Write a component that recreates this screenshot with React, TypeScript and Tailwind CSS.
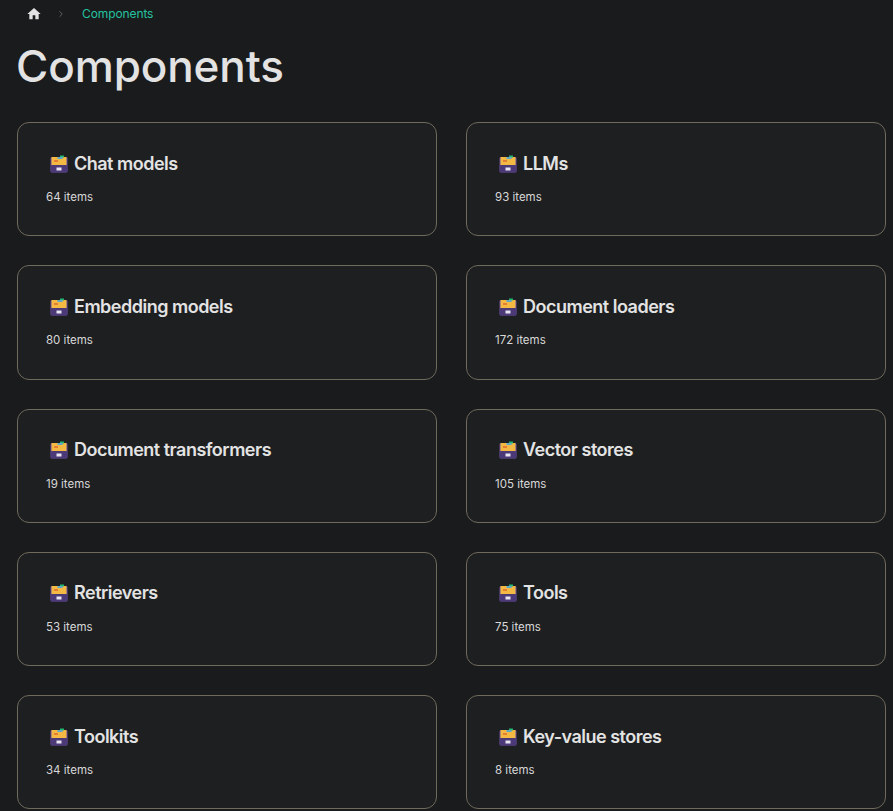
import { ChevronRight } from 'lucide-react';

const CARDS = [
  { title: 'Chat models', count: '64 items' },
  { title: 'LLMs', count: '93 items' },
  { title: 'Embedding models', count: '80 items' },
  { title: 'Document loaders', count: '172 items' },
  { title: 'Document transformers', count: '19 items' },
  { title: 'Vector stores', count: '105 items' },
  { title: 'Retrievers', count: '53 items' },
  { title: 'Tools', count: '75 items' },
  { title: 'Toolkits', count: '34 items' },
  { title: 'Key-value stores', count: '8 items' },
];

// Card file box emoji, drawn by hand so it has the same colours everywhere.
function FileBox() {
  return (
    <svg width="18" height="18" viewBox="0 0 18 18" className="shrink-0">
      <rect x="0.5" y="2" width="17" height="15.5" rx="1.5" fill="#6a4f9e" />
      <rect x="1.5" y="2" width="15" height="8.5" fill="#f4b942" />
      <rect x="10" y="0.5" width="4" height="2" fill="#21b573" />
      <rect x="7.5" y="2" width="5" height="2" fill="#5fa8c8" />
      <rect x="4" y="5.5" width="4" height="1" fill="#d9452b" />
      <rect x="0.5" y="10" width="17" height="7.5" rx="1.5" fill="#4c3a78" />
      <rect x="6.5" y="12.5" width="5" height="3" fill="#e8e4f2" />
    </svg>
  );
}

export default function App() {
  return (
    <div className="h-[811px] overflow-hidden bg-[#1a1b1d] pl-[17px] font-['Inter',sans-serif] text-[#e3e3e3]">
      <nav className="flex h-[28px] items-center">
        <svg viewBox="0 0 24 24" className="ml-[9px] h-[16px] w-[16px] fill-[#e3e3e3]">
          <path d="M10 20v-6h4v6h5v-8h3L12 3 2 12h3v8z" />
        </svg>
        <ChevronRight className="ml-[14px] h-[10px] w-[10px] text-[#6b6b6b]" />
        <span className="ml-[16px] text-[12px] tracking-[-0.1px] text-[#25c2a0]">Components</span>
      </nav>
      <h1 className="mt-[8px] ml-[-1px] h-[58px] text-[44px] leading-[60px] font-medium tracking-[-0.1px]">Components</h1>
      <div className="mt-[28px] grid grid-cols-[420px_420px] gap-x-[29px] gap-y-[29px]">
        {CARDS.map((card) => (
          <div
            key={card.title}
            className="h-[114.25px] rounded-[12px] border border-[#6f6a5c] bg-[#1e1f21] pt-[28.5px] pl-[28px]"
          >
            <div className="flex h-[24px] items-center gap-[6px] pl-[4px]">
              <FileBox />
              <h2 className="text-[18px] leading-[24px] font-semibold tracking-[-0.5px] text-[#e3e3e3]">{card.title}</h2>
            </div>
            <p className="mt-[12.5px] text-[11.5px] leading-[18px] text-[#d8d8d8]">{card.count}</p>
          </div>
        ))}
      </div>
    </div>
  );
}
